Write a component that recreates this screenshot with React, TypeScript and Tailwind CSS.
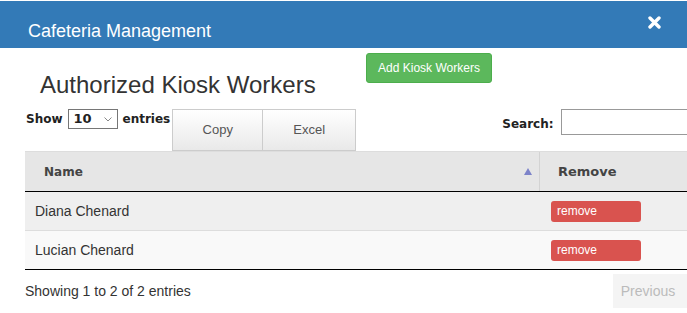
import React from 'react';

const workers = ['Diana Chenard', 'Lucian Chenard'];

const App: React.FC = () => {
  return (
    <div className="relative w-[687px] h-[313px] overflow-hidden bg-white font-['Liberation_Sans',Arial,sans-serif] text-[#333]">
      {/* modal header */}
      <div className="mt-px flex h-[47px] w-[687px] items-center justify-between bg-[#337ab7] pl-[28px] pr-[26px]">
        <span className="pt-[14px] text-[18px] text-white">Cafeteria Management</span>
        <svg width="13" height="13" viewBox="0 0 13 13" className="mb-[5px]">
          <path d="M2 2 L11 11 M11 2 L2 11" stroke="#fff" strokeWidth="3.4" strokeLinecap="round" />
        </svg>
      </div>

      <div className="w-[760px]">
        {/* title + add button */}
        <div className="flex h-[61px] items-start">
          <h2 className="ml-[40px] mt-[23px] w-[326px] text-[24px] leading-[28px]">Authorized Kiosk Workers</h2>
          <button className="mt-[5px] h-[30px] w-[126px] rounded-[3px] border border-[#4cae4c] bg-[#5cb85c] text-[12px] text-white">
            Add Kiosk Workers
          </button>
        </div>

        {/* controls */}
        <div className="flex h-[42px] items-start">
          <div className="ml-[26px] flex h-[20px] items-center gap-[5px] font-['DejaVu_Sans',Verdana,sans-serif] text-[12px] font-bold text-[#222]">
            <span>Show</span>
            <div className="flex h-[20px] w-[50px] items-center justify-between border border-[#767676] bg-white pl-[5px] pr-[5px]">
              <span className="text-[13px]">10</span>
              <svg width="8" height="5" viewBox="0 0 8 5">
                <path d="M0.5 0.5 L4 4 L7.5 0.5" stroke="#888" strokeWidth="1" fill="none" />
              </svg>
            </div>
            <span>entries</span>
          </div>
          <div className="ml-[2px] flex h-[42px]">
            <button className="h-[42px] w-[91px] border border-[#ccc] bg-gradient-to-b from-white to-[#e9e9e9] text-[13px] text-[#555]">
              Copy
            </button>
            <button className="h-[42px] w-[93px] border border-l-0 border-[#ccc] bg-gradient-to-b from-white to-[#e9e9e9] text-[13px] text-[#555]">
              Excel
            </button>
          </div>
          <div className="ml-[146px] flex items-start gap-[7px] font-['DejaVu_Sans',Verdana,sans-serif] text-[12px] font-bold text-[#222]">
            <span className="mt-[6px]">Search:</span>
            <div className="h-[26px] w-[160px] border border-[#999] bg-white" />
          </div>
        </div>

        {/* table */}
        <div className="ml-[25px]">
          <div className="flex h-[41px] border-b border-t border-b-black border-t-[#ddd] bg-[#e6e6e6] font-['DejaVu_Sans',Verdana,sans-serif] text-[12px] font-bold text-[#444]">
            <div className="flex w-[515px] items-center justify-between border-r border-[#d3d3d3] pl-[19px] pr-[7px]">
              <span>Name</span>
              <svg width="8" height="7" viewBox="0 0 8 7">
                <path d="M4 0 L8 7 L0 7 Z" fill="#7d83c9" />
              </svg>
            </div>
            <div className="flex items-center pl-[18px] text-[13px]">Remove</div>
          </div>
          {workers.map((w, i) => (
            <div
              key={w}
              className={`flex h-[39px] ${i === 0 ? 'border-b border-[#ddd] bg-[#efefef]' : 'border-b border-black bg-[#f9f9f9]'}`}
            >
              <div className="flex w-[516px] items-center pl-[10px] text-[14px]">{w}</div>
              <div className="flex items-center pl-[10px]">
                <button className="h-[21px] w-[90px] rounded-[3px] bg-[#d9534f] pl-[6px] text-left text-[12px] text-white">
                  remove
                </button>
              </div>
            </div>
          ))}
        </div>

        {/* footer */}
        <div className="flex items-start">
          <span className="ml-[25px] mt-[11px] text-[14px]">Showing 1 to 2 of 2 entries</span>
          <div className="ml-[422px] mt-[4px] flex h-[34px] w-[80px] items-center bg-[#f4f4f4] pl-[8px] text-[14px] text-[#bbb]">
            Previous
          </div>
        </div>
      </div>
    </div>
  );
};

export default App;
